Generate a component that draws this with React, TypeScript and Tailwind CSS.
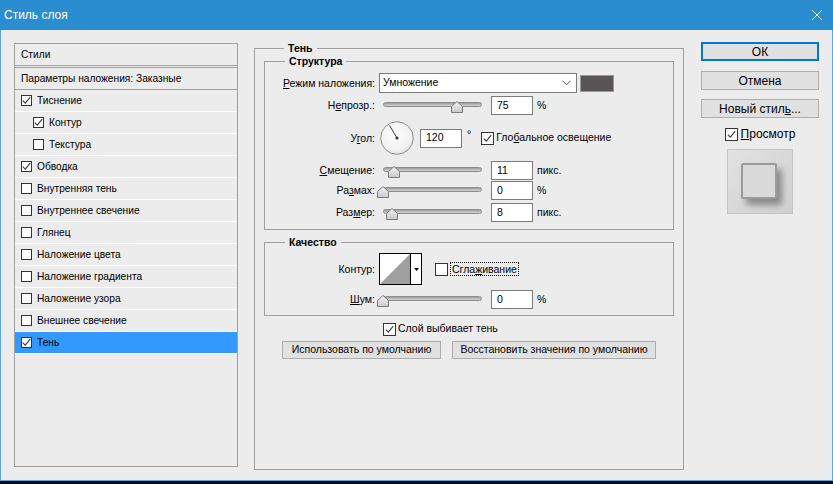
import React from 'react';

const CheckMark = () => (
  <svg width="9" height="9" viewBox="0 0 9 9" className="block">
    <path d="M0.8 4.6 L3.3 7.2 L8.2 1.2" stroke="#3a3a3a" strokeWidth="1.1" fill="none" />
  </svg>
);

const Box = ({ checked, small }: { checked?: boolean; small?: boolean }) => (
  <span
    className={
      small
        ? 'inline-flex shrink-0 items-center justify-center w-[11px] h-[11px] border border-[#333] bg-white'
        : 'inline-flex shrink-0 items-center justify-center w-[13px] h-[13px] border border-[#333] bg-white'
    }
  >
    {checked && <CheckMark />}
  </span>
);

const Slider = ({ pos }: { pos: number }) => (
  <div className="relative w-[99px] h-[19px] ml-[8px] shrink-0">
    <div className="absolute left-0 right-0 top-[6px] h-[5px] rounded-full border border-[#8d8d8d] bg-gradient-to-b from-[#9c9c9c] to-[#d4d4d4]" />
    <svg className="absolute top-[5px]" style={{ left: pos - 6 }} width="12" height="12" viewBox="0 0 12 12">
      <defs>
        <linearGradient id="tg" x1="0" y1="0" x2="0" y2="1">
          <stop offset="0" stopColor="#f4f4f4" />
          <stop offset="1" stopColor="#c9c9c9" />
        </linearGradient>
      </defs>
      <polygon points="6,0.5 11.5,5.5 11.5,11.5 0.5,11.5 0.5,5.5" fill="url(#tg)" stroke="#7c7c7c" strokeWidth="1" />
    </svg>
  </div>
);

const Input = ({ value }: { value: string }) => (
  <div className="w-[42px] h-[19px] border border-[#7a7a7a] bg-white pl-[5px] flex items-center text-[10.5px] shrink-0">
    {value}
  </div>
);

const Label = ({ children }: { children: React.ReactNode }) => (
  <div className="w-[110px] shrink-0 text-right text-[10.5px] leading-none">{children}</div>
);

const Unit = ({ children }: { children: React.ReactNode }) => (
  <span className="ml-[4px] text-[10.5px]">{children}</span>
);

const Dial = () => (
  <svg width="34" height="34" viewBox="0 0 34 34" className="ml-[5px] shrink-0">
    <defs>
      <radialGradient id="dg" cx="0.45" cy="0.4" r="0.7">
        <stop offset="0" stopColor="#ffffff" />
        <stop offset="0.7" stopColor="#f0f0f0" />
        <stop offset="1" stopColor="#d2d2d2" />
      </radialGradient>
    </defs>
    <circle cx="17" cy="17" r="16.3" fill="url(#dg)" stroke="#8e8e8e" strokeWidth="1" />
    <line x1="17" y1="17" x2="9.5" y2="4.5" stroke="#3a3a3a" strokeWidth="1" />
    <circle cx="17" cy="17" r="1.6" fill="#3a3a3a" />
  </svg>
);

const Btn = ({ children, cls }: { children: React.ReactNode; cls: string }) => (
  <div className={`flex items-center justify-center bg-[#e1e1e1] border border-[#adadad] ${cls}`}>{children}</div>
);

const styles: { name: string; checked: boolean; indent?: boolean; selected?: boolean }[] = [
  { name: 'Тиснение', checked: true },
  { name: 'Контур', checked: true, indent: true },
  { name: 'Текстура', checked: false, indent: true },
  { name: 'Обводка', checked: true },
  { name: 'Внутренняя тень', checked: false },
  { name: 'Внутреннее свечение', checked: false },
  { name: 'Глянец', checked: false },
  { name: 'Наложение цвета', checked: false },
  { name: 'Наложение градиента', checked: false },
  { name: 'Наложение узора', checked: false },
  { name: 'Внешнее свечение', checked: false },
  { name: 'Тень', checked: true, selected: true },
];

export default function App() {
  return (
    <div className="w-[833px] h-[484px] bg-[#0b0b0b] overflow-hidden font-['Liberation_Sans',Arial,sans-serif] text-black">
      <div className="h-[481px] bg-[#ececec] border-x border-b border-[#5ea7dd] flex flex-col">
        {/* title bar */}
        <div className="h-[30px] bg-[#2a8dd0] -mx-px flex items-center justify-between pl-[4px] pr-[10px] text-white shrink-0">
          <span className="text-[12px]">Стиль слоя</span>
          <svg width="12" height="12" viewBox="0 0 12 12">
            <path d="M1 1 L11 11 M11 1 L1 11" stroke="#ffffff" strokeWidth="1" />
          </svg>
        </div>

        <div className="flex pt-[13px] pl-[13px]">
          {/* left panel */}
          <div className="w-[224px] h-[424px] border border-[#a0a0a0] flex flex-col text-[10.2px] shrink-0">
            <div className="h-[22px] border-b border-[#a0a0a0] flex items-center pl-[6px]">Стили</div>
            <div className="h-px" />
            <div className="h-[23px] border-y border-[#a0a0a0] flex items-center pl-[6px]">Параметры наложения: Заказные</div>
            {styles.map((s) => (
              <div
                key={s.name}
                className={
                  'h-[22px] border-b border-white flex items-center gap-[5px] ' +
                  (s.indent ? 'pl-[18px] ' : 'pl-[6px] ') +
                  (s.selected ? 'bg-[#3399ff]' : '')
                }
              >
                <Box checked={s.checked} small />
                <span>{s.name}</span>
              </div>
            ))}
          </div>

          {/* middle */}
          <fieldset className="ml-[16px] -mt-px w-[430px] h-[428px] border border-[#a0a0a0] px-[9px] shrink-0">
            <legend className="ml-[20px] px-[4px] text-[10.5px] font-bold leading-[13px]">Тень</legend>

            <fieldset className="border border-[#a0a0a0] pb-[7px]">
              <legend className="ml-[20px] px-[4px] text-[10.5px] font-bold leading-[13px]">Структура</legend>
              <div className="flex flex-col pt-[5px]">
                <div className="h-[20px] flex items-center">
                  <Label>
                    <u>Р</u>ежим наложения:
                  </Label>
                  <div className="ml-[4px] w-[198px] h-[20px] border border-[#7a7a7a] bg-white flex items-center justify-between pl-[3px] pr-[5px] text-[10.5px]">
                    <span>Умножение</span>
                    <svg width="9" height="6" viewBox="0 0 9 6">
                      <path d="M0.5 0.8 L4.5 4.8 L8.5 0.8" stroke="#555" strokeWidth="1" fill="none" />
                    </svg>
                  </div>
                  <div className="ml-[3px] w-[34px] h-[17px] bg-[#595556] border border-[#9a9a9a]" />
                </div>

                <div className="h-[19px] mt-[3px] flex items-center">
                  <Label>
                    Н<u>е</u>прозр.:
                  </Label>
                  <Slider pos={74} />
                  <div className="ml-[9px]"><Input value="75" /></div>
                  <Unit>%</Unit>
                </div>

                <div className="h-[34px] mt-[6px] flex items-center">
                  <Label>
                    У<u>г</u>ол:
                  </Label>
                  <Dial />
                  <div className="ml-[6px]"><Input value="120" /></div>
                  <span className="ml-[5px] text-[10.5px] -mt-[6px]">°</span>
                  <div className="ml-[10px] flex items-center gap-[2px] text-[10.5px]">
                    <Box checked />
                    <span>
                      Гло<u>б</u>альное освещение
                    </span>
                  </div>
                </div>

                <div className="h-[19px] mt-[6px] flex items-center">
                  <Label>
                    <u>С</u>мещение:
                  </Label>
                  <Slider pos={11} />
                  <div className="ml-[9px]"><Input value="11" /></div>
                  <Unit>пикс.</Unit>
                </div>

                <div className="h-[19px] mt-px flex items-center">
                  <Label>
                    Ра<u>з</u>мах:
                  </Label>
                  <Slider pos={0} />
                  <div className="ml-[9px]"><Input value="0" /></div>
                  <Unit>%</Unit>
                </div>

                <div className="h-[19px] mt-[3px] flex items-center">
                  <Label>
                    Раз<u>м</u>ер:
                  </Label>
                  <Slider pos={9} />
                  <div className="ml-[9px]"><Input value="8" /></div>
                  <Unit>пикс.</Unit>
                </div>
              </div>
            </fieldset>

            <fieldset className="mt-[6px] border border-[#a0a0a0] pb-[6px]">
              <legend className="ml-[20px] px-[4px] text-[10.5px] font-bold leading-[13px]">Качество</legend>
              <div className="flex flex-col pt-[4px]">
                <div className="h-[32px] flex items-center">
                  <Label>Контур:</Label>
                  <div className="ml-[4px] w-[43px] h-[32px] border border-black bg-white flex">
                    <svg width="30" height="30" viewBox="0 0 30 30" className="block">
                      <polygon points="0,30 30,0 30,30" fill="#9f9f9f" />
                    </svg>
                    <div className="flex-1 border-l border-black flex items-center justify-center">
                      <svg width="5" height="3" viewBox="0 0 5 3">
                        <polygon points="0,0 5,0 2.5,3" fill="#000" />
                      </svg>
                    </div>
                  </div>
                  <div className="ml-[13px] flex items-center gap-[2px] text-[10.5px]">
                    <Box />
                    <span className="border border-dotted border-black px-px leading-[12px]">
                      Сгла<u>ж</u>ивание
                    </span>
                  </div>
                </div>

                <div className="h-[19px] mt-[5px] flex items-center">
                  <Label>
                    <u>Ш</u>ум:
                  </Label>
                  <Slider pos={0} />
                  <div className="ml-[9px]"><Input value="0" /></div>
                  <Unit>%</Unit>
                </div>
              </div>
            </fieldset>

            <div className="mt-[6px] ml-[119px] h-[14px] flex items-center gap-[2px] text-[10.5px]">
              <Box checked />
              <span>Слой выбивает тень</span>
            </div>

            <div className="mt-[5px] ml-[18px] flex gap-[11px] text-[10.5px]">
              <Btn cls="w-[159px] h-[18px]">Использовать по умолчанию</Btn>
              <Btn cls="w-[204px] h-[18px]">Восстановить значения по умолчанию</Btn>
            </div>
          </fieldset>

          {/* right */}
          <div className="ml-[17px] w-[118px] flex flex-col text-[12px] shrink-0">
            <div className="-mt-px h-[19px] flex items-center justify-center bg-[#e1e1e1] border-2 border-[#0078d7]">ОК</div>
            <Btn cls="mt-[10px] h-[19px]">Отмена</Btn>
            <Btn cls="mt-[9px] h-[19px]">
              <span>
                Новый стил<u>ь</u>...
              </span>
            </Btn>
            <div className="mt-[9px] h-[14px] flex items-center justify-center gap-[3px]">
              <Box checked />
              <span>
                <u>П</u>росмотр
              </span>
            </div>
            <div className="mt-[8px] self-center w-[66px] h-[65px] border border-[#c4c4c4] bg-gradient-to-br from-[#e2e2e2] to-[#cfcfcf] flex items-center justify-center">
              <div className="w-[36px] h-[36px] -mt-[2px] -ml-[2px] border-2 border-[#9b9b9b] bg-[#dadada] rounded-[2px] shadow-[5px_6px_6px_rgba(0,0,0,0.35)]" />
            </div>
          </div>
        </div>
      </div>
    </div>
  );
}
